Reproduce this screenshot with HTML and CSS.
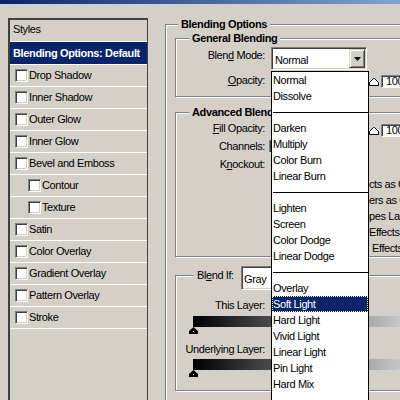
FILE: index.html
```html
<!DOCTYPE html>
<html>
<head>
<meta charset="utf-8">
<title>Layer Style</title>
<link rel="stylesheet" href="styles.css">
</head>
<body>
<div class="dialog">
  <div class="titlebar"></div>
  <div class="content">
    <div class="styles-panel">
      <div class="panel-head">Styles</div>
      <div class="panel-row selected">Blending Options: Default</div>
      <div class="panel-row"><span class="cb"></span>Drop Shadow</div>
      <div class="panel-row"><span class="cb"></span>Inner Shadow</div>
      <div class="panel-row"><span class="cb"></span>Outer Glow</div>
      <div class="panel-row"><span class="cb"></span>Inner Glow</div>
      <div class="panel-row"><span class="cb"></span>Bevel and Emboss</div>
      <div class="panel-row sub"><span class="cb"></span>Contour</div>
      <div class="panel-row sub"><span class="cb"></span>Texture</div>
      <div class="panel-row"><span class="cb"></span>Satin</div>
      <div class="panel-row"><span class="cb"></span>Color Overlay</div>
      <div class="panel-row"><span class="cb"></span>Gradient Overlay</div>
      <div class="panel-row"><span class="cb"></span>Pattern Overlay</div>
      <div class="panel-row"><span class="cb"></span>Stroke</div>
    </div>

    <div class="options">
      <div class="group outer">
        <div class="group-title">Blending Options</div>

        <div class="group general">
          <div class="group-title">General Blending</div>
          <div class="form form-general">
            <div class="lbl lbl-top">Blen<u>d</u> Mode:</div>
            <div class="select-wrap">
              <div class="select">
                <span class="select-text">Normal</span>
                <span class="drop-btn"><svg width="7" height="4" viewBox="0 0 7 4"><path d="M0 0H7L3.5 4Z" fill="#000"/></svg></span>
              </div>
              <ul class="list">
                <li>Normal</li>
                <li>Dissolve</li>
                <li class="sep"></li>
                <li>Darken</li>
                <li>Multiply</li>
                <li>Color Burn</li>
                <li>Linear Burn</li>
                <li class="sep"></li>
                <li>Lighten</li>
                <li>Screen</li>
                <li>Color Dodge</li>
                <li>Linear Dodge</li>
                <li class="sep"></li>
                <li>Overlay</li>
                <li class="hl">Soft Light</li>
                <li>Hard Light</li>
                <li>Vivid Light</li>
                <li>Linear Light</li>
                <li>Pin Light</li>
                <li>Hard Mix</li>
                <li></li>
              </ul>
            </div>
            <div class="lbl"><u>O</u>pacity:</div>
            <div class="slider-row">
              <span class="track"></span>
              <svg class="thumb" width="10" height="8" viewBox="0 0 10 8"><path d="M0.5 7.5V4.5L4.5 0.5H5.5L9.5 4.5V7.5Z" fill="#fff" stroke="#000"/></svg>
              <span class="num">100</span>
            </div>
          </div>
        </div>

        <div class="group advanced">
          <div class="group-title">Advanced Blending</div>
          <div class="form form-advanced">
            <div class="lbl"><u>F</u>ill Opacity:</div>
            <div class="slider-row">
              <span class="track"></span>
              <svg class="thumb" width="10" height="8" viewBox="0 0 10 8"><path d="M0.5 7.5V4.5L4.5 0.5H5.5L9.5 4.5V7.5Z" fill="#fff" stroke="#000"/></svg>
              <span class="num">100</span>
            </div>
            <div class="lbl">Channels:</div>
            <div class="channels"><span class="cb"></span></div>
            <div class="lbl">K<u>n</u>ockout:</div>
            <div></div>
          </div>
          <div class="checks">
            <div>cts as Group</div>
            <div>ers as Group</div>
            <div>pes Layer</div>
            <div>Effects</div>
            <div class="shift">Effects</div>
          </div>
        </div>

        <div class="group blendif">
          <div class="blendif-title">
            <span class="bi-label">Bl<u>e</u>nd If:</span>
            <div class="select select-gray">
              <span class="select-text">Gray</span>
              <span class="drop-btn"><svg width="7" height="4" viewBox="0 0 7 4"><path d="M0 0H7L3.5 4Z" fill="#000"/></svg></span>
            </div>
          </div>
          <div class="lbl lbl-block">This Layer:</div>
          <div class="ramp"></div>
          <svg class="handle" width="9" height="7" viewBox="0 0 9 7"><path d="M4.5 0L9 4V7H0V4Z" fill="#000"/><rect x="4" y="4" width="1" height="1" fill="#fff"/></svg>
          <div class="lbl lbl-block lbl-under">Underlying Layer:</div>
          <div class="ramp ramp2"></div>
          <svg class="handle" width="9" height="7" viewBox="0 0 9 7"><path d="M4.5 0L9 4V7H0V4Z" fill="#000"/><rect x="4" y="4" width="1" height="1" fill="#fff"/></svg>
        </div>
      </div>
    </div>
  </div>
</div>
</body>
</html>
```

FILE: styles.css
```css
* { box-sizing: border-box; }
html, body { margin: 0; padding: 0; }
body {
  width: 400px;
  height: 400px;
  overflow: hidden;
  background: #d4d0c8;
  font-family: "Liberation Sans", Arial, sans-serif;
  font-size: 11px;
  letter-spacing: -0.4px;
  color: #000;
}
.dialog { width: 520px; }
.titlebar {
  height: 4px;
  background: linear-gradient(90deg, #0a246a 0, #a6caf0 520px);
}
.content {
  display: flex;
  align-items: flex-start;
  padding: 14px 0 0 8px;
}

/* left styles list */
.styles-panel {
  flex: none;
  width: 140px;
  height: 400px;
  border-style: solid;
  border-color: #404040;
  border-width: 2px 1px 0 2px;
  display: flex;
  flex-direction: column;
}
.panel-head {
  height: 22px;
  line-height: 19px;
  padding-left: 3px;
  border-bottom: 1px solid #fff;
}
.panel-row {
  flex: none;
  height: 22px;
  line-height: 21px;
  border-bottom: 1px solid #fff;
  display: flex;
  align-items: center;
  gap: 1px;
  padding-left: 5px;
  white-space: nowrap;
}
.panel-row.selected {
  height: 23px;
  background: #0a246a;
  color: #fff;
  font-weight: bold;
  letter-spacing: -0.35px;
  padding-left: 3px;
}
.panel-row.sub { padding-left: 18px; }
.cb {
  flex: none;
  display: inline-block;
  width: 13px;
  height: 13px;
  background: #fff;
  border: 1px solid;
  border-color: #808080 #fff #fff #808080;
  box-shadow: inset 1px 1px 0 #404040, inset -1px -1px 0 #d4d0c8;
}

/* right options */
.options {
  flex: none;
  width: 330px;
  margin: 6px 0 0 17px;
}
.group {
  border: 1px solid #808080;
  box-shadow: inset 1px 1px 0 #fff, 1px 1px 0 #fff;
}
.group-title {
  width: max-content;
  margin: -7px 0 0 13px;
  padding: 0 3px;
  background: #d4d0c8;
  font-weight: bold;
  letter-spacing: -0.35px;
  line-height: 13px;
  white-space: nowrap;
}
.outer {
  height: 420px;
  padding-left: 9px;
}
.outer > .group-title { margin-left: 3px; }

.general { margin-top: 7px; padding-bottom: 8px; }
.advanced { margin-top: 15px; }
.blendif { margin-top: 18px; padding-bottom: 13px; }

.form {
  display: grid;
  grid-template-columns: 89px 1fr;
  column-gap: 6px;
}
.form-general {
  margin-top: 2px;
  grid-template-rows: 23px 16px;
  row-gap: 2px;
}
.form-advanced {
  margin-top: 1px;
  grid-template-rows: 16px 16px 16px;
  row-gap: 2px;
}
.lbl {
  text-align: right;
  line-height: 16px;
  white-space: nowrap;
}
.lbl-top {
  align-self: start;
  line-height: 13px;
  padding-top: 2px;
}

/* select */
.select-wrap { position: relative; }
.select {
  width: 96px;
  height: 23px;
  background: #fff;
  border: 1px solid;
  border-color: #808080 #fff #fff #808080;
  box-shadow: inset 1px 1px 0 #404040, inset -1px -1px 0 #d4d0c8;
  display: flex;
  align-items: center;
  padding: 1px 1px 1px 3px;
}
.select-text { margin-top: 2px; white-space: nowrap; }
.drop-btn {
  margin-left: auto;
  width: 16px;
  height: 19px;
  background: #d4d0c8;
  border: 1px solid;
  border-color: #d4d0c8 #404040 #404040 #d4d0c8;
  box-shadow: inset 1px 1px 0 #fff, inset -1px -1px 0 #808080;
  display: flex;
  align-items: center;
  justify-content: center;
}
.drop-btn svg { display: block; }

.list {
  position: absolute;
  left: 0;
  top: 24px;
  z-index: 10;
  width: 98px;
  height: 340px;
  margin: 0;
  padding: 0;
  list-style: none;
  background: #fff;
  border: 1px solid #000;
}
.list li {
  height: 16px;
  line-height: 16px;
  padding-left: 1px;
  white-space: nowrap;
}
.list li.sep { padding-top: 8px; }
.list li.sep::before {
  content: "";
  display: block;
  height: 1px;
  background: #000;
}
.list li.hl {
  background: #0a246a;
  color: #fff;
  border: 1px dotted #f0f0b0;
  line-height: 14px;
  padding-left: 0;
}

/* slider with number field */
.slider-row {
  display: flex;
  align-items: flex-start;
}
.track { flex: none; width: 98px; height: 16px; }
.thumb { flex: none; display: block; margin-top: 6px; }
.num {
  flex: none;
  width: 40px;
  height: 13px;
  margin: 3px 0 0 2px;
  padding-left: 4px;
  background: #fff;
  border: 1px solid;
  border-color: #808080 #fff #fff #808080;
  box-shadow: inset 1px 1px 0 #404040;
  line-height: 11px;
}
.form-advanced .thumb { margin-top: 7px; }
.form-advanced .num { margin-top: 4px; }

.channels { display: flex; align-items: center; margin-left: -2px; }

.checks {
  margin: 4px 0 0 193px;
  line-height: 16px;
  white-space: nowrap;
}
.checks .shift { padding-left: 3px; }

/* blend if */
.blendif-title {
  display: flex;
  align-items: flex-start;
  width: max-content;
  height: 24px;
  margin: -10px 0 0 18px;
  padding: 0 3px;
  background: #d4d0c8;
}
.bi-label {
  width: 44px;
  margin-top: 3px;
  line-height: 13px;
  white-space: nowrap;
}
.select-gray {
  width: 80px;
  height: 24px;
  padding-left: 2px;
}
.lbl-block {
  width: 89px;
  margin-top: 9px;
  line-height: 13px;
}
.ramp {
  width: 265px;
  height: 11px;
  margin: 4px 0 0 17px;
  background: linear-gradient(90deg, #000, #fff);
}
.ramp2 { margin-top: 3px; }
.handle { display: block; margin-left: 13px; }
```
